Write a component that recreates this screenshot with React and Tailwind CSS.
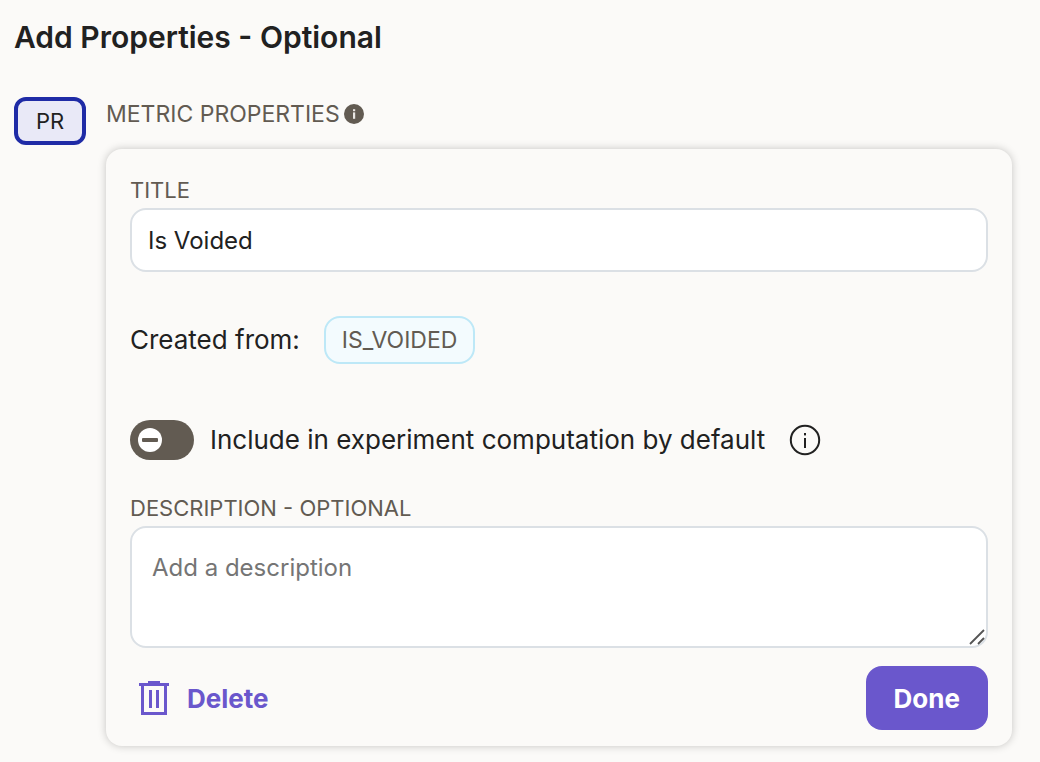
import { useState } from "react";

function InfoSolid() {
  return (
    <svg viewBox="0 0 20 20" className="size-5" aria-hidden="true">
      <circle cx="10" cy="10" r="10" fill="#625b52" />
      <rect x="9" y="8.4" width="2.2" height="6.4" fill="#e9e7e4" />
      <rect x="9" y="5.2" width="2.2" height="2" fill="#e9e7e4" />
    </svg>
  );
}

function InfoOutline() {
  return (
    <svg viewBox="0 0 32 32" className="size-8" aria-hidden="true">
      <circle cx="16" cy="16" r="14.2" fill="none" stroke="#212121" strokeWidth="2" />
      <rect x="15" y="14" width="2" height="10" fill="#212121" />
      <rect x="15" y="9" width="2" height="2.4" fill="#212121" />
    </svg>
  );
}

function Trash() {
  return (
    <svg viewBox="0 0 30 34" className="h-[34px] w-[30px]" fill="#6a57cc" aria-hidden="true">
      <rect x="9" y="0" width="12" height="2" />
      <rect x="0" y="2" width="30" height="3" />
      <path d="M2 4h26v30H2zM5 5v26h20V5z" fillRule="evenodd" />
      <rect x="10" y="9" width="3" height="18" />
      <rect x="17" y="9" width="3" height="18" />
    </svg>
  );
}

function Toggle({ id, checked, onChange }) {
  return (
    <span className="relative flex h-10 w-16 shrink-0 items-center rounded-full bg-[#625b52] px-2 has-checked:justify-end">
      <input
        id={id}
        type="checkbox"
        role="switch"
        checked={checked}
        onChange={(e) => onChange(e.target.checked)}
        className="absolute inset-0 cursor-pointer appearance-none rounded-full"
      />
      <span className="pointer-events-none flex size-6 items-center justify-center rounded-full bg-white">
        <span className="h-1 w-4 rounded-[1px] bg-[#625b52]" />
      </span>
    </span>
  );
}

export default function App() {
  const [title, setTitle] = useState("Is Voided");
  const [description, setDescription] = useState("");
  const [included, setIncluded] = useState(false);

  return (
    <main className="min-h-screen bg-[#fbfaf8] pt-[15px] pr-7 pb-4 pl-[14px] font-['Inter',sans-serif] text-[#212121]">
      <h1 className="text-[30px] leading-11 font-semibold">Add Properties - Optional</h1>

      <div className="mt-[37px] flex items-start gap-5">
        <span className="mt-px flex h-12 w-[72px] shrink-0 items-center justify-center rounded-xl border-4 border-[#1f2ba6] bg-[#e9e9f7] text-[22px]">
          PR
        </span>

        <section className="min-w-0 flex-1">
          <div className="flex h-9 items-center gap-1">
            <h2 className="text-[23px] leading-7 text-[#625b52]">METRIC PROPERTIES</h2>
            <button type="button" aria-label="About metric properties">
              <InfoSolid />
            </button>
          </div>

          <div className="mt-[17px] rounded-2xl bg-[#fbfaf8] px-6 pt-[27px] pb-4 shadow-[0_0_8px_rgba(0,0,0,0.22)]">
            <label htmlFor="title" className="mb-1 block text-[22px] leading-7 text-[#625b52]">
              TITLE
            </label>
            <input
              id="title"
              value={title}
              onChange={(e) => setTitle(e.target.value)}
              className="block h-16 w-full rounded-2xl border-2 border-[#dbe0e5] bg-white px-4 text-[24px] outline-none"
            />

            <div className="mt-11 flex items-center gap-6">
              <span className="text-[26px] leading-8">Created from:</span>
              <span className="flex h-12 items-center rounded-2xl border-2 border-[#bde8f7] bg-[#f3fbfe] px-4 text-[23px] text-[#625b52]">
                IS_VOIDED
              </span>
            </div>

            <div className="mt-14 flex items-center">
              <Toggle id="include" checked={included} onChange={setIncluded} />
              <label htmlFor="include" className="ml-4 text-[26px] leading-8">
                Include in experiment computation by default
              </label>
              <button type="button" className="ml-6" aria-label="About experiment computation">
                <InfoOutline />
              </button>
            </div>

            <label htmlFor="description" className="mt-[34px] mb-1 block text-[22px] leading-7 text-[#625b52]">
              DESCRIPTION - OPTIONAL
            </label>
            <div className="relative">
              <textarea
                id="description"
                value={description}
                onChange={(e) => setDescription(e.target.value)}
                placeholder="Add a description"
                className="block h-[122px] w-full resize-none rounded-2xl border-2 border-[#dbe0e5] bg-white px-5 py-6 text-[24px] leading-8 outline-none placeholder:text-[#757575]"
              />
              <svg viewBox="0 0 16 16" className="pointer-events-none absolute right-[3px] bottom-[3px] size-4" aria-hidden="true">
                <path d="M1 15L15 1M9 15L15 9" stroke="#555" strokeWidth="1.8" />
              </svg>
            </div>

            <div className="mt-[18px] flex items-center justify-between">
              <button type="button" className="flex h-16 items-center gap-[18px] pl-[9px] text-[26px] font-bold text-[#6a57cc]">
                <Trash />
                Delete
              </button>
              <button type="button" className="h-16 rounded-2xl bg-[#6a57cc] px-7 text-[26px] font-bold text-white">
                Done
              </button>
            </div>
          </div>
        </section>
      </div>
    </main>
  );
}
